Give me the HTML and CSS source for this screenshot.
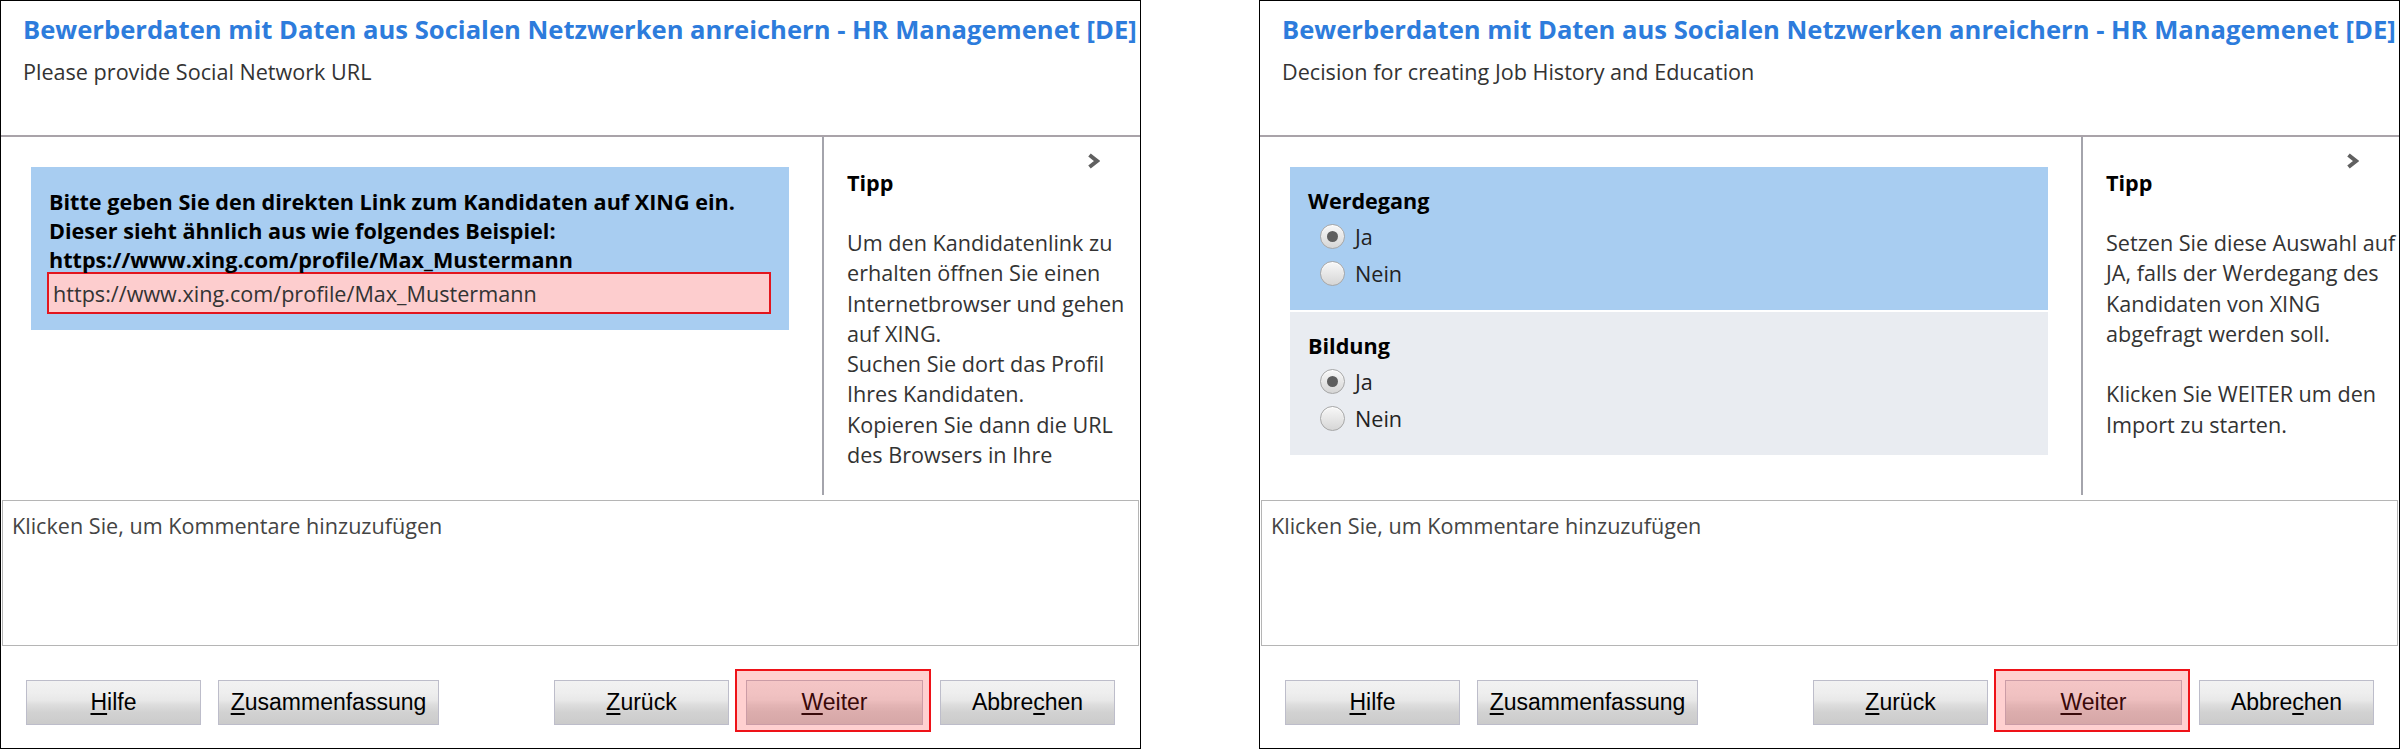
FILE: index.html
```html
<!DOCTYPE html>
<html lang="de">
  <head>
    <meta charset="UTF-8" />
    <meta name="viewport" content="width=device-width, initial-scale=1.0" />
    <title>Bewerberdaten anreichern</title>
    <link rel="stylesheet" href="styles.css">
  </head>
  <body>
    <div class="screens">
      <!-- Step 1: profile URL -->
      <section class="wizard">
        <header class="wizard-head">
          <h1 class="wizard-title">Bewerberdaten mit Daten aus Socialen Netzwerken anreichern - HR Managemenet [DE]</h1>
          <p class="wizard-step">Please provide Social Network URL</p>
        </header>

        <div class="wizard-main">
          <div class="wizard-content">
            <div class="field-box">
              <p class="field-label">
                Bitte geben Sie den direkten Link zum Kandidaten auf XING ein.<br>
                Dieser sieht ähnlich aus wie folgendes Beispiel:<br>
                https://www.xing.com/profile/Max_Mustermann
              </p>
              <input class="url-input" type="text" value="https://www.xing.com/profile/Max_Mustermann" readonly>
            </div>
          </div>
          <aside class="tip">
            <svg class="tip-toggle" width="13" height="16" viewBox="0 0 13 16">
              <path d="M2.5 2 L10 8 L2.5 14" />
            </svg>
            <h2>Tipp</h2>
            <p>
              Um den Kandidatenlink zu<br>
              erhalten öffnen Sie einen<br>
              Internetbrowser und gehen<br>
              auf XING.<br>
              Suchen Sie dort das Profil<br>
              Ihres Kandidaten.<br>
              Kopieren Sie dann die URL<br>
              des Browsers in Ihre
            </p>
          </aside>
        </div>

        <div class="comment">Klicken Sie, um Kommentare hinzuzufügen</div>

        <div class="button-bar">
          <div class="button-group">
            <button class="btn"><u>H</u>ilfe</button>
            <button class="btn btn-wide"><u>Z</u>usammenfassung</button>
          </div>
          <div class="button-group">
            <button class="btn"><u>Z</u>urück</button>
            <button class="btn btn-next"><u>W</u>eiter<span class="spot"></span></button>
            <button class="btn">Abbre<u>c</u>hen</button>
          </div>
        </div>
      </section>

      <!-- Step 2: job history / education -->
      <section class="wizard">
        <header class="wizard-head">
          <h1 class="wizard-title">Bewerberdaten mit Daten aus Socialen Netzwerken anreichern - HR Managemenet [DE]</h1>
          <p class="wizard-step">Decision for creating Job History and Education</p>
        </header>

        <div class="wizard-main">
          <div class="wizard-content">
            <div class="option-group">
              <h3>Werdegang</h3>
              <label class="radio"><span class="radio-dot checked"></span>Ja</label>
              <label class="radio"><span class="radio-dot"></span>Nein</label>
            </div>
            <div class="option-group alt">
              <h3>Bildung</h3>
              <label class="radio"><span class="radio-dot checked"></span>Ja</label>
              <label class="radio"><span class="radio-dot"></span>Nein</label>
            </div>
          </div>
          <aside class="tip">
            <svg class="tip-toggle" width="13" height="16" viewBox="0 0 13 16">
              <path d="M2.5 2 L10 8 L2.5 14" />
            </svg>
            <h2>Tipp</h2>
            <p>
              Setzen Sie diese Auswahl auf<br>
              JA, falls der Werdegang des<br>
              Kandidaten von XING<br>
              abgefragt werden soll.<br>
              <br>
              Klicken Sie WEITER um den<br>
              Import zu starten.
            </p>
          </aside>
        </div>

        <div class="comment">Klicken Sie, um Kommentare hinzuzufügen</div>

        <div class="button-bar">
          <div class="button-group">
            <button class="btn"><u>H</u>ilfe</button>
            <button class="btn btn-wide"><u>Z</u>usammenfassung</button>
          </div>
          <div class="button-group">
            <button class="btn"><u>Z</u>urück</button>
            <button class="btn btn-next"><u>W</u>eiter<span class="spot"></span></button>
            <button class="btn">Abbre<u>c</u>hen</button>
          </div>
        </div>
      </section>
    </div>
  </body>
</html>
```

FILE: styles.css
```css
* {
  margin: 0;
  padding: 0;
  box-sizing: border-box;
}

:root {
  --title-color: #2d7cdc;
  --text-color: #333333;
  --line-color: #a9a3a9;
  --blue-box: #a8cdf1;
  --gray-box: #e9ecf1;
  --ui-font: "Open Sans", "Noto Sans", sans-serif;
}

body {
  font-family: var(--ui-font);
  font-size: 21.6px;
  color: var(--text-color);
  background: #ffffff;
  overflow: hidden;
}

.screens {
  display: flex;
  gap: 118px;
  width: 2400px;
  height: 749px;
}

.wizard {
  width: 1141px;
  height: 749px;
  border: 1px solid #000000;
  display: flex;
  flex-direction: column;
  overflow: hidden;
  white-space: nowrap;
}

.wizard-head {
  flex: 0 0 136px;
  padding: 12px 0 0 22px;
  border-bottom: 2px solid var(--line-color);
}

.wizard-title {
  font-size: 25.6px;
  font-weight: 700;
  line-height: 34px;
  color: var(--title-color);
}

.wizard-step {
  margin-top: 10px;
  line-height: 30px;
}

.wizard-main {
  flex: 0 0 358px;
  display: flex;
}

.wizard-content {
  flex: 0 0 821px;
  padding: 30px 0 0 30px;
}

.field-box {
  width: 758px;
  background: var(--blue-box);
  padding: 20px 18px 16px 16px;
}

.field-label {
  font-weight: 700;
  line-height: 29px;
  color: #000000;
  padding-left: 2px;
}

.url-input {
  display: block;
  width: 724px;
  height: 42px;
  margin-top: -2px;
  padding: 0 4px;
  border: 2px solid #e3161e;
  background: #fdcdce;
  font-family: var(--ui-font);
  font-size: 21.6px;
  color: var(--text-color);
  outline: none;
}

.option-group {
  width: 758px;
  background: var(--blue-box);
  padding: 19px 18px 18px;
}

.option-group.alt {
  background: var(--gray-box);
  margin-top: 2px;
}

.option-group h3 {
  font-size: 21.6px;
  font-weight: 700;
  line-height: 30px;
  color: #000000;
  margin-bottom: 2px;
}

.radio {
  display: flex;
  align-items: center;
  height: 37px;
  padding-left: 12px;
  color: #222222;
}

.radio-dot {
  position: relative;
  width: 25px;
  height: 25px;
  margin-right: 10px;
  border: 1px solid #a6a6a6;
  border-radius: 50%;
  background: linear-gradient(#f8f8f8, #d6d6d6);
  box-shadow: inset 0 1px 1px #ffffff;
}

.radio-dot.checked::after {
  content: "";
  position: absolute;
  top: 6px;
  left: 6px;
  width: 11px;
  height: 11px;
  border-radius: 50%;
  background: #5e5e5e;
}

.tip {
  position: relative;
  flex: 1;
  border-left: 2px solid #a4a4ac;
  padding: 31px 0 0 23px;
}

.tip-toggle {
  position: absolute;
  top: 16px;
  right: 40px;
}

.tip-toggle path {
  fill: none;
  stroke: #606060;
  stroke-width: 4;
}

.tip h2 {
  font-size: 21.6px;
  font-weight: 700;
  line-height: 30px;
  color: #000000;
}

.tip p {
  margin-top: 30px;
  line-height: 30.3px;
}

.comment {
  flex: 0 0 146px;
  margin: 5px 1px 0;
  padding: 10px 9px;
  border: 1px solid #b5b5b5;
  line-height: 30px;
  color: #444444;
}

.button-bar {
  display: flex;
  justify-content: space-between;
  padding: 34px 25px 0;
}

.button-group {
  display: flex;
  gap: 17px;
}

.btn {
  position: relative;
  width: 175px;
  height: 45px;
  border: 1px solid #bdbdca;
  background: linear-gradient(
    #f2f2f2 0%,
    #eeeeee 28%,
    #e8e8e8 45%,
    #dddddd 55%,
    #d2d2d2 72%,
    #cbcbcb 100%
  );
  font-family: "Liberation Sans", Arial, sans-serif;
  font-size: 23px;
  color: #000000;
}

.btn u {
  text-underline-offset: 3px;
}

.btn-wide {
  width: 221px;
}

.btn-next {
  width: 177px;
}

/* tutorial highlight over the next button */
.spot {
  position: absolute;
  top: -12px;
  left: -12px;
  right: -9px;
  bottom: -8px;
  border: 2px solid #ee1218;
  background: rgba(255, 40, 40, 0.22);
}
```
